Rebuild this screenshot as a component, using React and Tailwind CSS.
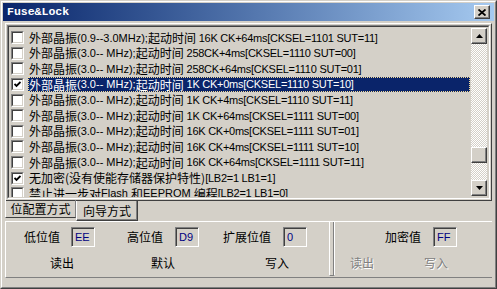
const CN = "font-['Noto_Sans_CJK_SC',sans-serif]"
const LAT = "font-['Liberation_Sans',Arial,sans-serif]"

const rows = [
  { a: '外部晶振', b: '(0.9--3.0MHz);', c: '起动时间', d: ' 16K CK+64ms[CKSEL=1101 SUT=11]' },
  { a: '外部晶振', b: '(3.0-- MHz);', c: '起动时间', d: ' 258CK+4ms[CKSEL=1110 SUT=00]' },
  { a: '外部晶振', b: '(3.0-- MHz);', c: '起动时间', d: ' 258CK+64ms[CKSEL=1110 SUT=01]' },
  { a: '外部晶振', b: '(3.0-- MHz);', c: '起动时间', d: ' 1K CK+0ms[CKSEL=1110 SUT=10]', checked: true, selected: true },
  { a: '外部晶振', b: '(3.0-- MHz);', c: '起动时间', d: ' 1K CK+4ms[CKSEL=1110 SUT=11]' },
  { a: '外部晶振', b: '(3.0-- MHz);', c: '起动时间', d: ' 1K CK+64ms[CKSEL=1111 SUT=00]' },
  { a: '外部晶振', b: '(3.0-- MHz);', c: '起动时间', d: ' 16K CK+0ms[CKSEL=1111 SUT=01]' },
  { a: '外部晶振', b: '(3.0-- MHz);', c: '起动时间', d: ' 16K CK+4ms[CKSEL=1111 SUT=10]' },
  { a: '外部晶振', b: '(3.0-- MHz);', c: '起动时间', d: ' 16K CK+64ms[CKSEL=1111 SUT=11]' },
  { a: '无加密(没有使能存储器保护特性)', b: '[LB2=1 LB1=1]', checked: true },
  { a: '禁止进一步对', b: 'Flash ', c: '和', d: 'EEPROM ', e: '编程', f: '[LB2=1 LB1=0]' },
]

function CheckBox({ checked }) {
  return (
    <div className="w-[13px] h-[13px] shrink-0 bg-white border border-t-[#808080] border-l-[#808080] border-r-white border-b-white flex items-center justify-center">
      <div className="w-full h-full border border-t-[#404040] border-l-[#404040] border-r-[#d4d0c8] border-b-[#d4d0c8] flex items-center justify-center">
        {checked && (
          <svg width="7" height="7" viewBox="0 0 7 7">
            <path d="M0.5 3 L2.5 5 L6.5 1" fill="none" stroke="#000" strokeWidth="1.8" />
          </svg>
        )}
      </div>
    </div>
  )
}

function Row({ r }) {
  const parts = [r.a, r.b, r.c, r.d, r.e, r.f]
  return (
    <div className="h-[15.6px] flex items-center pl-[2px]">
      <CheckBox checked={r.checked} />
      <div
        className={
          'ml-[4px] h-full flex items-center pl-[1px] whitespace-pre ' +
          (r.selected
            ? 'flex-1 bg-[#0a246a] text-white outline outline-1 outline-dotted outline-[#f5db95] -outline-offset-1'
            : 'text-black')
        }
      >
        {parts.map((p, i) => {
          if (!p) return null
          if (i % 2 === 0) return <span key={i} className={CN + ' text-[12px]'}>{p}</span>
          const tight = p.startsWith(' ') || p.startsWith('[')
          return (
            <span key={i} className={LAT + ' text-[11px] ' + (tight ? 'tracking-[-0.25px]' : '')}>
              {p}
            </span>
          )
        })}
      </div>
    </div>
  )
}

function Raised({ className = '', children }) {
  return (
    <div className={'border border-t-white border-l-white border-r-[#404040] border-b-[#404040] bg-[#d4d0c8] shadow-[inset_-1px_-1px_#808080] ' + className}>
      {children}
    </div>
  )
}

function Field({ value }) {
  return (
    <div className="w-[24px] h-[20px] border border-t-[#808080] border-l-[#808080] border-r-white border-b-white shadow-[inset_1px_1px_#404040] flex items-center pl-[3px]">
      <span className={LAT + ' text-[11px] text-[#000080]'}>{value}</span>
    </div>
  )
}

function Label({ children, disabled, className = '' }) {
  return (
    <span
      className={
        CN + ' text-[12px] leading-none ' +
        (disabled ? 'text-[#808080] [text-shadow:1px_1px_0_#fff] ' : 'text-black ') +
        className
      }
    >
      {children}
    </span>
  )
}

export default function App() {
  return (
    <div className="w-[497px] h-[289px] bg-[#d4d0c8] border border-t-[#d4d0c8] border-l-[#d4d0c8] border-r-[#404040] border-b-[#404040] overflow-hidden">
      <div className="w-full h-full border border-t-white border-l-white border-r-[#808080] border-b-[#808080] flex flex-col">
        {/* title bar */}
        <div className="h-[18px] mx-[1px] mt-[1px] bg-linear-to-r from-[#0a246a] to-[#a6caf0] flex items-center justify-between pl-[4px] pr-[4px]">
          <span className="font-['Liberation_Mono',monospace] font-bold text-[11.5px] text-white">Fuse&amp;Lock</span>
          <Raised className="w-[16px] h-[14px] flex items-center justify-center">
            <svg width="8" height="7" viewBox="0 0 8 7">
              <path d="M0.5 0.5 L7.5 6.5 M7.5 0.5 L0.5 6.5" stroke="#000" strokeWidth="1.8" />
            </svg>
          </Raised>
        </div>

        {/* page with check list */}
        <div className="mx-[3px] mt-[2px] h-[178px] border border-t-white border-l-white border-r-[#404040] border-b-[#404040] p-[1px]">
          <div className="h-full border border-t-[#808080] border-l-[#808080] border-r-white border-b-white">
            <div className="h-full border border-t-[#404040] border-l-[#404040] border-r-[#d4d0c8] border-b-[#d4d0c8] bg-[#d4d0c8] flex">
              <div className="flex-1 overflow-hidden pt-[3px] pr-[1px]">
                {rows.map((r, i) => (
                  <Row key={i} r={r} />
                ))}
              </div>
              <div className="w-[16px] mr-[1px] my-[1px] flex flex-col bg-[image:repeating-conic-gradient(#ffffff_0%_25%,#d4d0c8_0%_50%)] bg-[length:2px_2px]">
                <Raised className="h-[16px] flex items-center justify-center">
                  <svg width="7" height="4" viewBox="0 0 7 4"><path d="M3.5 0 L7 4 L0 4 Z" fill="#000" /></svg>
                </Raised>
                <div className="h-[103px]" />
                <Raised className="h-[16px]" />
                <div className="flex-1" />
                <Raised className="h-[16px] flex items-center justify-center">
                  <svg width="7" height="4" viewBox="0 0 7 4"><path d="M0 0 L7 0 L3.5 4 Z" fill="#000" /></svg>
                </Raised>
              </div>
            </div>
          </div>
        </div>

        {/* tabs */}
        <div className="flex items-start ml-[3px] -mt-[1px] h-[21px]">
          <div className="h-[18px] w-[71px] border-l border-l-white border-b border-b-[#404040] border-r border-r-[#808080] flex items-center justify-center">
            <Label>位配置方式</Label>
          </div>
          <div className="mt-[1px] h-[20px] w-[62px] border-l border-l-white border-b border-b-[#404040] border-r border-r-[#404040] shadow-[inset_-1px_-1px_#808080] flex items-center justify-center">
            <Label>向导方式</Label>
          </div>
        </div>

        {/* settings panel */}
        <div className="mx-[3px] h-[57px] border-t border-t-white border-l border-l-white border-b border-b-[#808080] flex">
          <div className="w-[323px] flex flex-col">
            <div className="flex items-center mt-[5px] h-[20px]">
              <Label className="ml-[18px]">低位值</Label>
              <div className="ml-[11px]"><Field value="EE" /></div>
              <Label className="ml-[32px]">高位值</Label>
              <div className="ml-[12px]"><Field value="D9" /></div>
              <Label className="ml-[24px]">扩展位值</Label>
              <div className="ml-[12px]"><Field value="0" /></div>
            </div>
            <div className="flex items-center mt-[10px]">
              <Label className="ml-[44px]">读出</Label>
              <Label className="ml-[77px]">默认</Label>
              <Label className="ml-[90px]">写入</Label>
            </div>
          </div>
          <div className="w-[6px] h-[54px] border-l border-l-white border-r border-r-white border-b border-b-[#808080] shadow-[inset_-1px_0_#808080]" />
          <div className="flex-1 flex flex-col">
            <div className="flex items-center mt-[5px] h-[20px]">
              <Label className="ml-[50px]">加密值</Label>
              <div className="ml-[12px]"><Field value="FF" /></div>
            </div>
            <div className="flex items-center mt-[10px]">
              <Label disabled className="ml-[15px]">读出</Label>
              <Label disabled className="ml-[50px]">写入</Label>
            </div>
          </div>
        </div>
      </div>
    </div>
  )
}
